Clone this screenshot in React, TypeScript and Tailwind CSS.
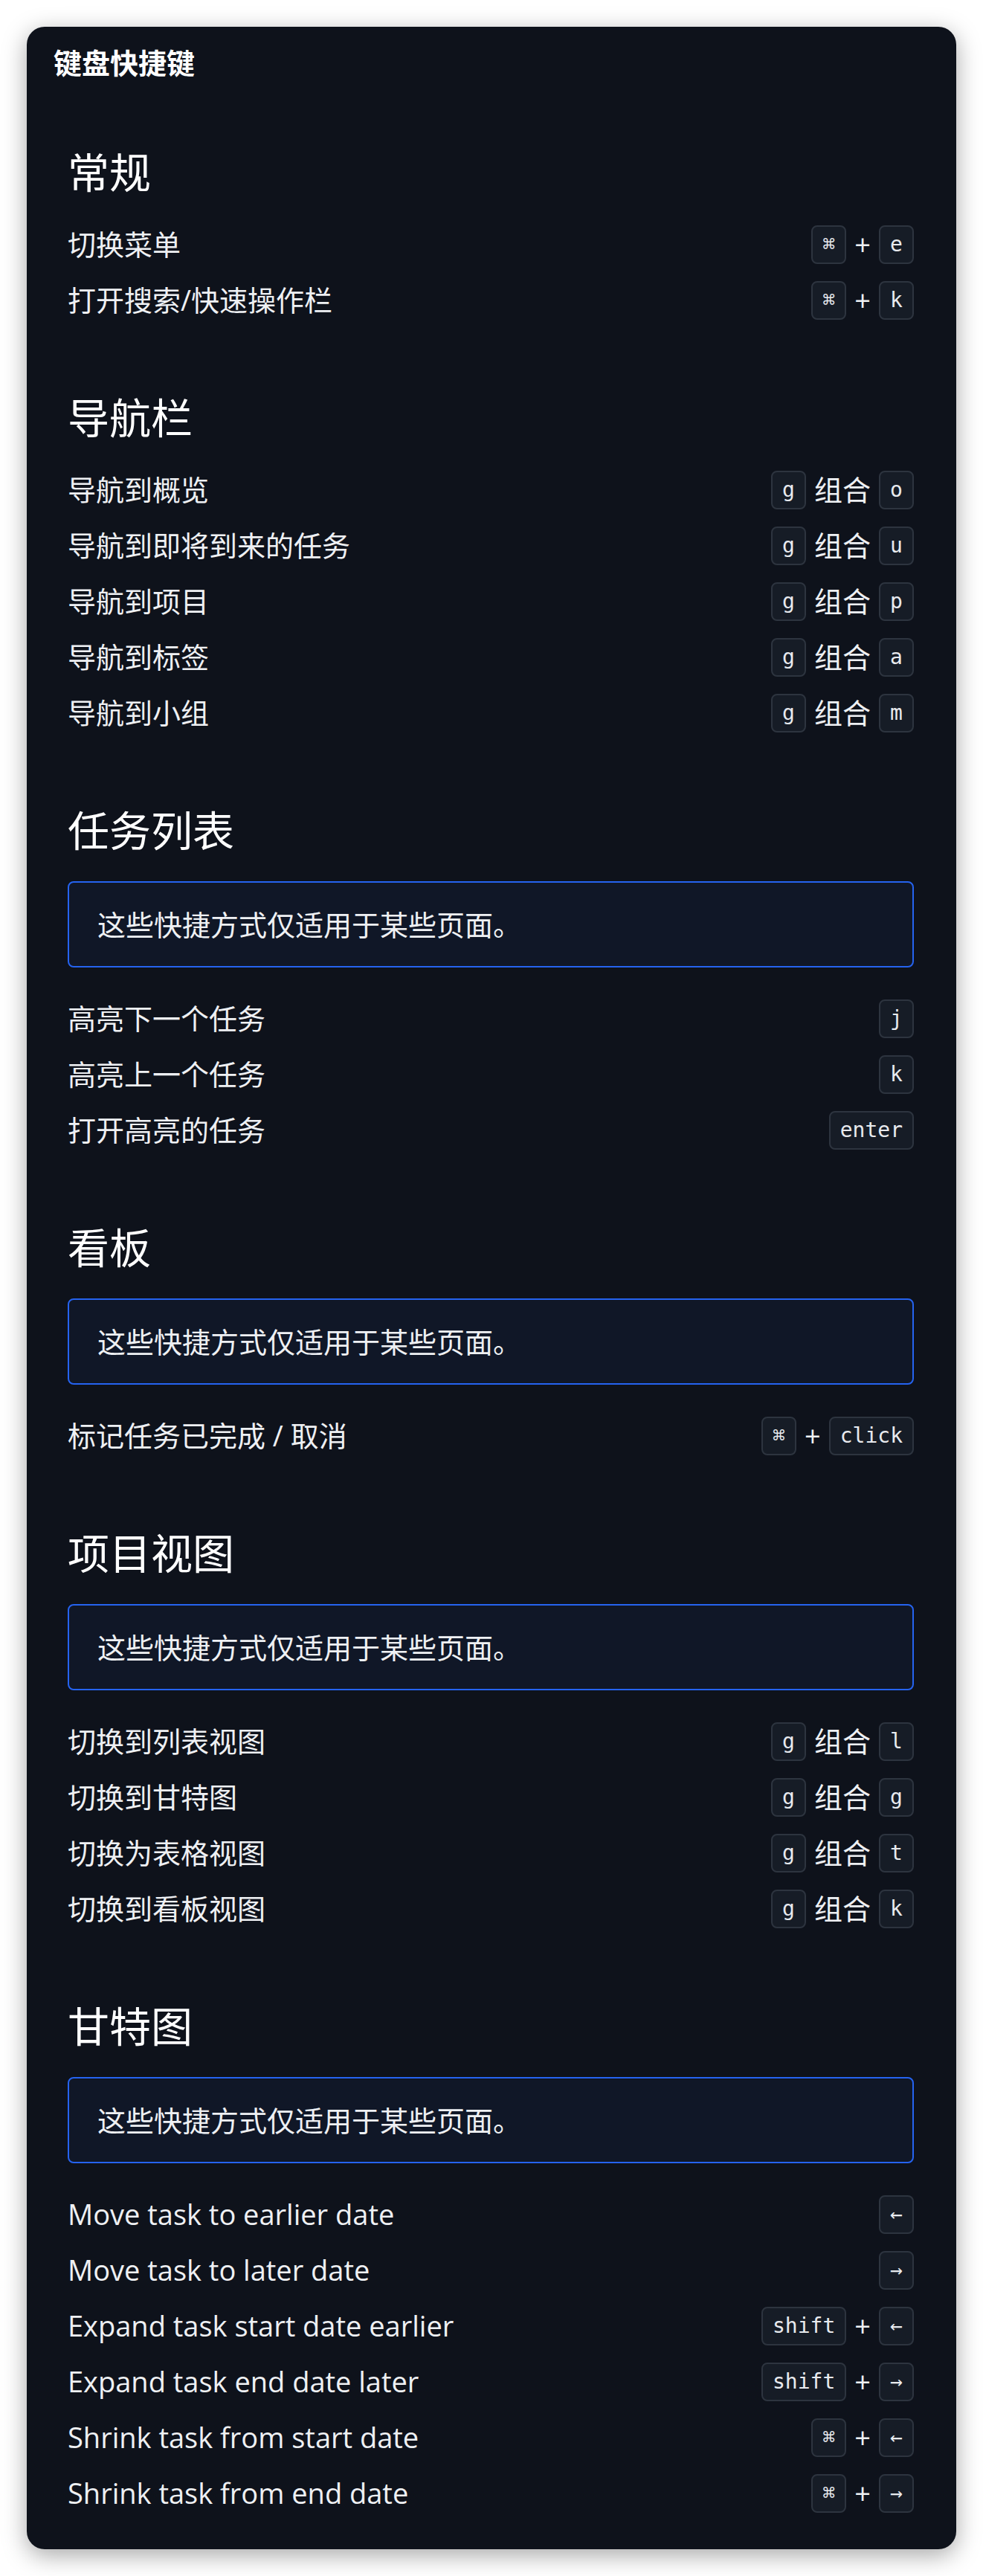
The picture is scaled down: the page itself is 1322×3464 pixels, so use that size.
import React from "react";

type Part = { k?: string; t?: string };
type Row = { label: string; keys: Part[] };
type Section = { title: string; note?: boolean; rows: Row[] };

const cmd = (a: string, b: string): Part[] => [{ k: a }, { t: "+" }, { k: b }];
const combo = (a: string, b: string): Part[] => [{ k: a }, { t: "组合" }, { k: b }];

const sections: Section[] = [
  {
    title: "常规",
    rows: [
      { label: "切换菜单", keys: cmd("⌘", "e") },
      { label: "打开搜索/快速操作栏", keys: cmd("⌘", "k") },
    ],
  },
  {
    title: "导航栏",
    rows: [
      { label: "导航到概览", keys: combo("g", "o") },
      { label: "导航到即将到来的任务", keys: combo("g", "u") },
      { label: "导航到项目", keys: combo("g", "p") },
      { label: "导航到标签", keys: combo("g", "a") },
      { label: "导航到小组", keys: combo("g", "m") },
    ],
  },
  {
    title: "任务列表",
    note: true,
    rows: [
      { label: "高亮下一个任务", keys: [{ k: "j" }] },
      { label: "高亮上一个任务", keys: [{ k: "k" }] },
      { label: "打开高亮的任务", keys: [{ k: "enter" }] },
    ],
  },
  {
    title: "看板",
    note: true,
    rows: [{ label: "标记任务已完成 / 取消", keys: cmd("⌘", "click") }],
  },
  {
    title: "项目视图",
    note: true,
    rows: [
      { label: "切换到列表视图", keys: combo("g", "l") },
      { label: "切换到甘特图", keys: combo("g", "g") },
      { label: "切换为表格视图", keys: combo("g", "t") },
      { label: "切换到看板视图", keys: combo("g", "k") },
    ],
  },
  {
    title: "甘特图",
    note: true,
    rows: [
      { label: "Move task to earlier date", keys: [{ k: "←" }] },
      { label: "Move task to later date", keys: [{ k: "→" }] },
      { label: "Expand task start date earlier", keys: cmd("shift", "←") },
      { label: "Expand task end date later", keys: cmd("shift", "→") },
      { label: "Shrink task from start date", keys: cmd("⌘", "←") },
      { label: "Shrink task from end date", keys: cmd("⌘", "→") },
    ],
  },
];

function Kbd({ children }: { children: React.ReactNode }) {
  return (
    <span className="flex h-[52px] min-w-[47px] items-center justify-center rounded-[8px] border-2 border-[#2d343f] bg-[#161c26] px-[13px] font-['DejaVu_Sans_Mono',monospace] text-[28px] leading-none text-[#e8eaee]">
      {children}
    </span>
  );
}

export default function App() {
  return (
    <div className="min-h-[3464px] bg-white pt-[36px] pb-[35px] font-['Open_Sans','Noto_Sans_CJK_SC',sans-serif]">
      <div className="mx-auto w-[1250px] rounded-[24px] bg-[#0e121b] pb-[47px] shadow-[0_8px_32px_rgba(0,0,0,0.35)]">
        <div className="px-[36px] pt-[20px]">
          <h1 className="text-[38px] font-bold leading-[57px] text-white">键盘快捷键</h1>
        </div>
        <div className="mt-[85px] flex flex-col gap-[96px] pl-[55px] pr-[57px]">
          {sections.map((s) => (
            <section key={s.title} className="flex flex-col">
              <h2 className="mb-[35px] text-[56px] font-normal leading-[67px] text-white">{s.title}</h2>
              {s.note && (
                <div className="mb-[40px] flex h-[116px] items-center rounded-[8px] border-2 border-[#2563f0] bg-[#101727] pl-[38px] text-[38px] leading-[57px] text-[#eef0f3]">
                  这些快捷方式仅适用于某些页面。
                </div>
              )}
              <div className="flex flex-col gap-[18px]">
                {s.rows.map((r) => (
                  <div key={r.label} className="flex items-center justify-between">
                    <span className="text-[38px] leading-[57px] text-[#eef0f3]">{r.label}</span>
                    <span className="flex items-center gap-[11px]">
                      {r.keys.map((p, i) =>
                        p.k !== undefined ? (
                          <Kbd key={i}>{p.k}</Kbd>
                        ) : (
                          <span key={i} className="text-[38px] leading-[57px] text-[#eef0f3]">
                            {p.t}
                          </span>
                        )
                      )}
                    </span>
                  </div>
                ))}
              </div>
            </section>
          ))}
        </div>
      </div>
    </div>
  );
}
